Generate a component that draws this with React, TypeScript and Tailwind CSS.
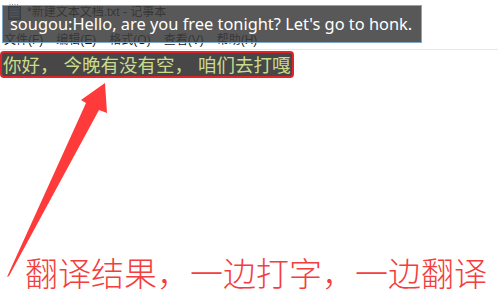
const menus = ["文件(F)", "编辑(E)", "格式(O)", "查看(V)", "帮助(H)"]

function NotepadIcon() {
  return (
    <svg width="15" height="16" viewBox="0 0 15 16" className="shrink-0">
      <rect x="1.5" y="1.5" width="12" height="14" fill="#5b8fc4" stroke="#2c4f78" />
      <path d="M3 5h9M3 7.5h9M3 10h9M3 12.5h9" stroke="#e8f0f8" strokeWidth="1" />
      <path d="M3 0.5v2.5M5.5 0.5v2.5M8 0.5v2.5M10.5 0.5v2.5" stroke="#333" strokeWidth="1" />
    </svg>
  )
}

export default function App() {
  return (
    <div className="relative w-[498px] h-[305px] overflow-hidden bg-white font-['Noto_Sans_CJK_SC',sans-serif]">
      {/* notepad window behind the tooltip */}
      <div className="flex flex-col">
        <div className="flex h-[23px] items-center gap-[5px] pl-[7px] text-[12px] text-[#111]">
          <NotepadIcon />
          <span className="whitespace-nowrap font-['Liberation_Sans','Noto_Sans_CJK_SC',sans-serif]">*新建文本文档.txt - 记事本</span>
        </div>
        <div className="mt-[9px] flex h-[16px] items-center gap-[13px] pl-[4px] font-['Liberation_Sans','Noto_Sans_CJK_SC',sans-serif] text-[12px] leading-[16px] text-[#111]">
          {menus.map((m) => (
            <span key={m} className="whitespace-nowrap">
              {m}
            </span>
          ))}
        </div>
        <div className="mt-[1px] h-[1px] bg-[#e8e8e8]" />
      </div>

      <div className="mt-[1px] inline-flex h-[27px] items-center whitespace-nowrap rounded-[4px] border-2 border-[#e0252a] bg-[#474747] pl-[1px] pr-[1px] text-[18.5px] leading-none text-[#cadb8c]">
        你好，<span className="w-[5px]" />今晚有没有空，<span className="w-[5px]" />咱们去打嘎
      </div>

      <div className="mt-[178px] whitespace-nowrap pl-[25px] text-[33px] font-light leading-[33px] text-[#f43d3d]">
        翻译结果，一边打字，一边翻译
      </div>

      {/* sougou translation tooltip */}
      <div className="absolute left-[2px] top-[5px] flex h-[38px] w-[420px] items-center whitespace-nowrap border border-[#7fa7c3] bg-[rgba(60,60,60,0.86)] pl-[7px] font-['Noto_Sans',sans-serif] text-[16.4px] text-white">
        sougou:Hello, are you free tonight? Let's go to honk.
      </div>

      {/* arrow */}
      <svg className="pointer-events-none absolute inset-0" width="498" height="305" viewBox="0 0 498 305">
        <polygon points="7,277 86,103 81,100 105,83 107,113 99,110 9,276" fill="#ff3a3a" />
      </svg>
    </div>
  )
}
